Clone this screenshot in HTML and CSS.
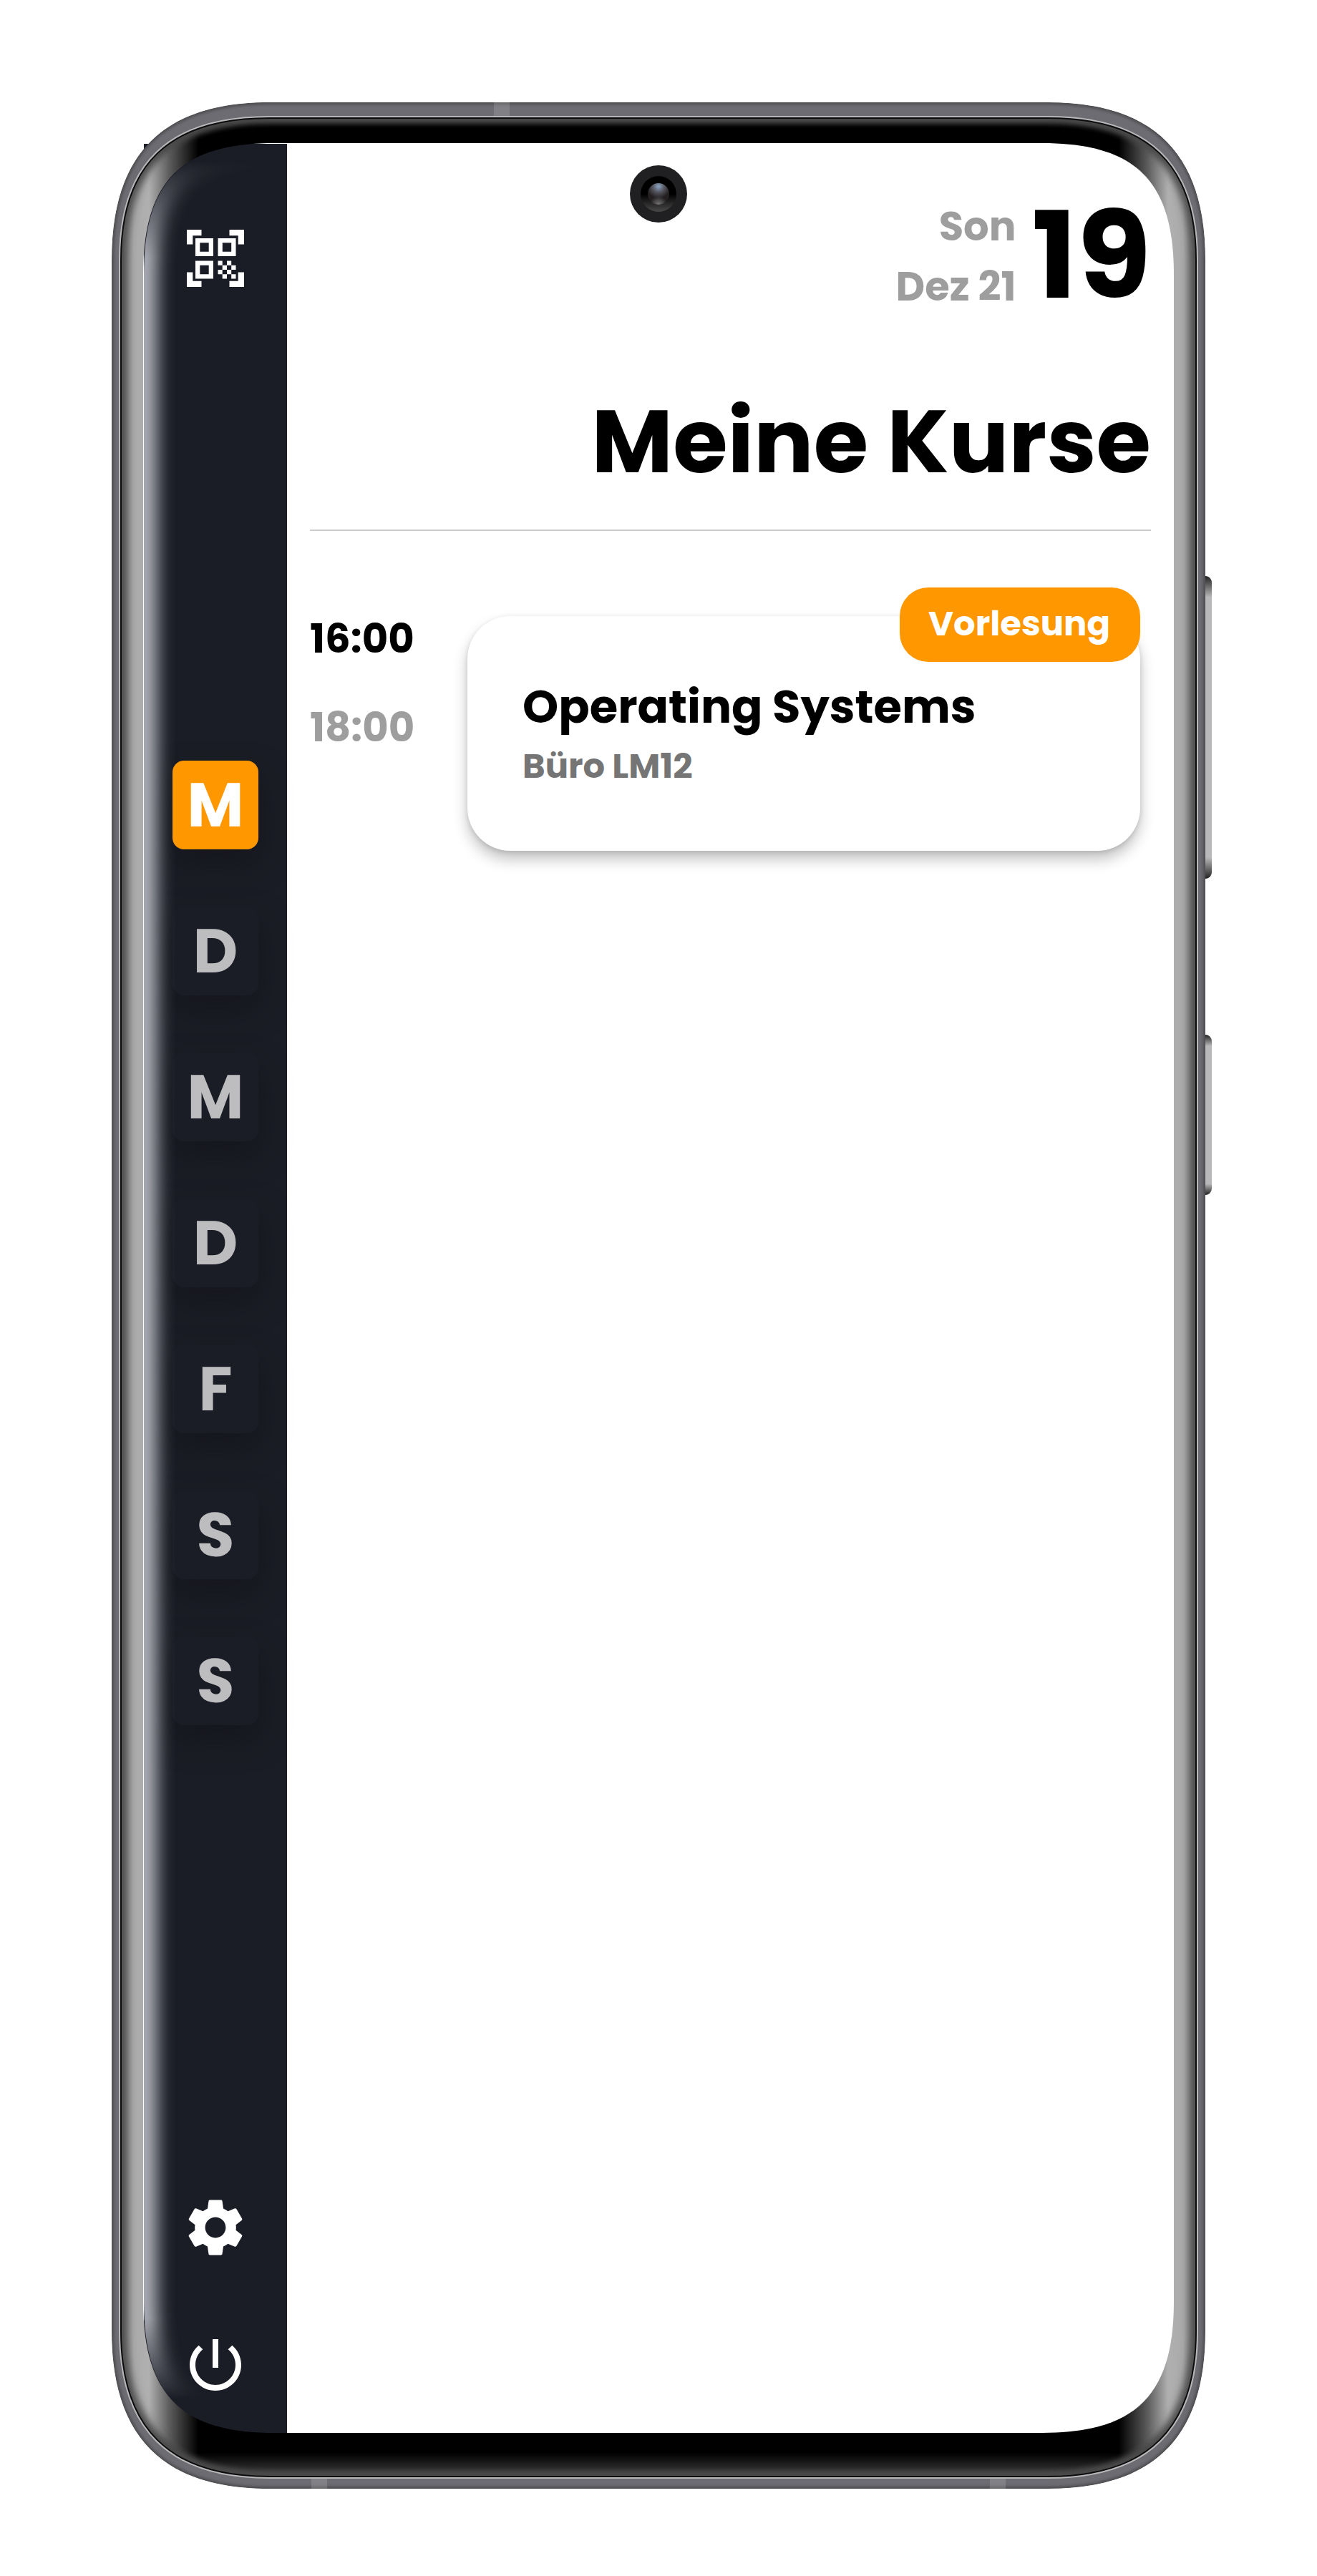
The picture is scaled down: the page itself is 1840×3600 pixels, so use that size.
FILE: index.html
```html
<!DOCTYPE html>
<html lang="de">
<head>
<meta charset="utf-8">
<title>Meine Kurse</title>
<link rel="stylesheet" href="styles.css">
</head>
<body>
<div class="device">
  <div class="screen">
    <nav class="sidebar">
      <svg class="icon-qr" viewBox="0 0 80 80" fill="#fff">
        <path d="M0 0h20.500v8.300H8.300v12.200H0zM59.500 0H80v20.500h-8.300V8.300H59.500zM0 59.500h8.300v12.200h12.200V80H0zM71.700 59.500H80V80H59.500v-8.300h12.200z"/>
        <path fill-rule="evenodd" d="M12 12h25v25H12zM18.300 18.300v12.400h12.400V18.300zM43.500 12h25v25h-25zM49.800 18.300v12.400h12.400V18.300zM12 43.500h25v25H12zM18.300 49.800v12.400h12.400V49.800z"/>
        <path d="M43.500 43.500h6.200v6.200h-6.200zM56 43.500h6.200v6.200H56zM49.700 49.700H56V56h-6.300zM62.200 49.700h6.300V56h-6.300zM43.500 56h6.200v6.200h-6.200zM56 56h6.200v6.200H56zM49.700 62.200H56v6.300h-6.300zM62.200 62.200h6.300v6.300h-6.300z"/>
      </svg>
      <div class="days">
        <span class="day active">M</span>
        <span class="day">D</span>
        <span class="day">M</span>
        <span class="day">D</span>
        <span class="day">F</span>
        <span class="day">S</span>
        <span class="day">S</span>
      </div>
      <div class="tools">
        <svg class="icon" viewBox="0 0 24 24" fill="#fff"><path d="M19.140 12.940c.04-.3.06-.61.06-.94 0-.32-.02-.64-.07-.94l2.030-1.580c.18-.14.23-.41.12-.61l-1.920-3.320c-.12-.22-.37-.29-.59-.22l-2.390.96c-.5-.38-1.030-.7-1.620-.94l-.36-2.540c-.04-.24-.24-.41-.48-.41h-3.840c-.24 0-.43.17-.47.41l-.36 2.540c-.59.24-1.130.57-1.620.94l-2.390-.96c-.22-.08-.47 0-.59.22L2.740 8.870c-.12.21-.08.47.12.61l2.030 1.580c-.05.3-.09.63-.09.94s.02.64.07.94l-2.030 1.580c-.18.14-.23.41-.12.61l1.920 3.320c.12.22.37.29.59.22l2.390-.96c.5.38 1.030.7 1.620.94l.36 2.540c.05.24.24.41.48.41h3.840c.24 0 .44-.17.47-.41l.36-2.540c.59-.24 1.130-.56 1.620-.94l2.390.96c.22.08.47 0 .59-.22l1.920-3.320c.12-.22.07-.47-.12-.61l-2.010-1.580zM12 15.600c-1.980 0-3.600-1.620-3.600-3.600s1.620-3.600 3.600-3.600 3.600 1.620 3.600 3.600-1.620 3.600-3.600 3.600z"/></svg>
        <svg class="icon" viewBox="0 0 24 24" fill="#fff"><path d="M13 3h-2v10h2V3zm4.830 2.170l-1.420 1.420C17.990 7.860 19 9.810 19 12c0 3.870-3.130 7-7 7s-7-3.130-7-7c0-2.190 1.010-4.140 2.580-5.420L6.170 5.170C4.230 6.820 3 9.260 3 12c0 4.970 4.030 9 9 9s9-4.030 9-9c0-2.740-1.230-5.180-3.170-6.830z"/></svg>
      </div>
    </nav>
    <main class="content">
      <div class="date">
        <div class="date-side"><span>Son</span><span>Dez 21</span></div>
        <div class="date-day">19</div>
      </div>
      <h1 class="title">Meine Kurse</h1>
      <section class="lesson">
        <div class="times"><span class="start">16:00</span><span class="end">18:00</span></div>
        <article class="card">
          <span class="badge">Vorlesung</span>
          <h2>Operating Systems</h2>
          <p>Büro LM12</p>
        </article>
      </section>
    </main>
  </div>

  <svg class="frame" viewBox="0 0 1840 3600">
    <defs>
      <linearGradient id="bezel" gradientUnits="userSpaceOnUse" x1="169" y1="0" x2="1671" y2="0">
        <stop offset="0" stop-color="#7c7c7c"/><stop offset=".012" stop-color="#aaa"/><stop offset=".026" stop-color="#b0b0b0"/><stop offset=".045" stop-color="#5c5c5c"/><stop offset=".072" stop-color="#000"/>
        <stop offset=".928" stop-color="#000"/><stop offset=".955" stop-color="#5c5c5c"/><stop offset=".974" stop-color="#b0b0b0"/><stop offset=".988" stop-color="#aaa"/><stop offset="1" stop-color="#7c7c7c"/>
      </linearGradient>
      <linearGradient id="chin" x1="0" y1="0" x2="0" y2="1"><stop offset="0" stop-color="#fff" stop-opacity="0"/><stop offset="1" stop-color="#fff" stop-opacity=".25"/></linearGradient>
      <linearGradient id="key" x1="0" y1="0" x2="0" y2="1"><stop offset="0" stop-color="#222"/><stop offset=".07" stop-color="#b8b8ba"/><stop offset=".93" stop-color="#b8b8ba"/><stop offset="1" stop-color="#222"/></linearGradient>
      <linearGradient id="fade" gradientUnits="userSpaceOnUse" x1="0" y1="200" x2="0" y2="3400"><stop offset=".008" stop-color="#000"/><stop offset=".05" stop-color="#fff"/><stop offset=".95" stop-color="#fff"/><stop offset=".985" stop-color="#000"/></linearGradient>
      <linearGradient id="socket" x1="0" y1="0" x2="0" y2="1"><stop offset=".5" stop-color="#000"/><stop offset="1" stop-color="#4a4a4a"/></linearGradient>
      <radialGradient id="lens" cx=".5" cy=".15" r=".55"><stop offset="0" stop-color="#8aa4c4"/><stop offset=".5" stop-color="#55555f"/><stop offset="1" stop-color="#231f20"/></radialGradient>
      <radialGradient id="glint" cx=".5" cy="1" r=".4"><stop offset="0" stop-color="#777"/><stop offset="1" stop-color="#777" stop-opacity="0"/></radialGradient>
      <filter id="soft" filterUnits="userSpaceOnUse" x="100" y="100" width="1640" height="3420"><feGaussianBlur stdDeviation="6 3"/></filter>
      <filter id="edge" filterUnits="userSpaceOnUse" x="100" y="100" width="1640" height="3420"><feGaussianBlur stdDeviation="2"/></filter>
      <filter id="glow" filterUnits="userSpaceOnUse" x="100" y="100" width="1640" height="3420"><feGaussianBlur stdDeviation="12"/></filter>
      <path id="outer" d="M156 363C156 215 228 143 376 143H1464C1612 143 1684 215 1684 363V3258C1684 3406 1612 3478 1464 3478H376C228 3478 156 3406 156 3258Z"/>
      <path id="inner" d="M169 363C169 230 236 165 376 165H1464C1604 165 1671 230 1671 363V3258C1671 3393 1604 3461 1464 3461H376C236 3461 169 3393 169 3258Z"/>
      <path id="display" d="M200 384C200 253 253 200 384 200H1456C1587 200 1640 253 1640 384V3216C1640 3347 1587 3400 1456 3400H384C253 3400 200 3347 200 3216Z"/>
      <clipPath id="inOuter"><use href="#outer"/></clipPath>
      <clipPath id="inInner"><use href="#inner"/></clipPath>
      <clipPath id="inDisplay"><path d="M201 384C201 253 253 201 384 201H401V3400H384C253 3400 201 3347 201 3216Z"/></clipPath>
      <mask id="ring" maskUnits="userSpaceOnUse" x="0" y="0" width="1840" height="3600"><use href="#outer" fill="#fff"/><use href="#display" fill="#000"/></mask>
      <mask id="fadeMask" maskUnits="userSpaceOnUse" x="0" y="0" width="1840" height="3600"><rect width="1840" height="3600" fill="url(#fade)"/></mask>
    </defs>

    <g clip-path="url(#inDisplay)"><g mask="url(#fadeMask)">
      <use href="#display" fill="none" stroke="#dcdde6" stroke-opacity=".8" stroke-width="38" filter="url(#glow)"/>
    </g></g>

    <rect x="1676" y="805" width="17" height="423" rx="9" fill="url(#key)"/>
    <rect x="1676" y="1446" width="17" height="224" rx="9" fill="url(#key)"/>

    <g mask="url(#ring)">
      <use href="#outer" fill="#6d6c72"/>
      <g clip-path="url(#inOuter)">
        <use href="#outer" fill="none" stroke="#47464a" stroke-width="5" filter="url(#edge)"/>
        <path d="M690 143h22v20h-22zM435 3461h22v17h-22zM1383 3461h22v17h-22z" fill="#fff" fill-opacity=".14"/>
      </g>
      <use href="#inner" fill="#b8b8ba" stroke="#b8b8ba" stroke-width="6"/>
      <use href="#inner" fill="url(#bezel)"/>
      <g clip-path="url(#inInner)">
        <rect x="169" y="3428" width="1502" height="33" fill="url(#chin)"/>
        <use href="#inner" fill="none" stroke="#4a4a4a" stroke-width="16" filter="url(#soft)"/>
      </g>
      <use href="#inner" fill="none" stroke="#0c0c0c" stroke-width="2"/>
    </g>

    <circle cx="920" cy="271" r="40" fill="#202022"/>
    <circle cx="920" cy="271" r="25" fill="url(#socket)"/>
    <circle cx="920" cy="271" r="15" fill="url(#lens)"/>
    <circle cx="920" cy="271" r="15" fill="url(#glint)"/>
  </svg>
</div>
</body>
</html>
```
FILE: styles.css
```css
* { box-sizing: border-box; margin: 0; padding: 0; }
body { background: #fff; font-family: "Poppins", "Inter", sans-serif; font-weight: 700; color: #000; }
.device { position: relative; width: 1840px; height: 3600px; padding: 201px 200px 200px 201px; }
.screen { display: flex; height: 3199px; }
.frame { position: absolute; inset: 0; width: 1840px; height: 3600px; pointer-events: none; }

.sidebar { width: 200px; background: #1b1d26; display: flex; flex-direction: column; align-items: center; justify-content: space-between; padding: 120px 0 47px; }
.icon-qr { width: 80px; height: 80px; }
.days { display: flex; flex-direction: column; gap: 80px; margin-top: 8px; }
.day { display: flex; align-items: center; justify-content: center; width: 120px; height: 124px; border-radius: 16px; background: #1b1d26; color: #bdbdbf; font-size: 86px; line-height: 1; box-shadow: 0 20px 40px rgba(16, 16, 24, .55); }
.day.active { background: #ff9800; color: #fff; }
.tools { display: flex; flex-direction: column; gap: 96px; }
.icon { display: block; width: 96px; height: 96px; }

.content { flex: 1; padding: 80px 32px 0; }
.date { display: flex; justify-content: flex-end; gap: 22px; height: 168px; }
.date-side { display: flex; flex-direction: column; align-items: flex-end; margin-top: -6px; color: #9e9e9e; font-size: 56px; line-height: 84px; }
.date-day { font-size: 168px; line-height: 154px; }
.title { height: 293px; padding-top: 83px; border-bottom: 2px solid #ccc; text-align: right; font-size: 124px; line-height: 170px; }
.lesson { display: flex; }
.times { display: flex; flex-direction: column; flex: none; width: 220px; padding-top: 89px; }
.start, .end { font-size: 56px; line-height: 124px; }
.end { color: #9e9e9e; }
.card { position: relative; flex: none; width: 940px; height: 328px; margin-top: 119px; padding: 79px 77px; border-radius: 60px; box-shadow: 0 12px 20px rgba(0, 0, 0, .24), 0 2px 6px rgba(0, 0, 0, .12); }
.card h2 { font-size: 64px; line-height: 96px; white-space: nowrap; }
.card p { font-size: 48px; line-height: 70px; color: #757575; }
.badge { position: absolute; right: 0; top: -40px; width: 336px; height: 104px; padding-right: 2px; border-radius: 40px; background: #ff9800; color: #fff; font-size: 48px; line-height: 102px; text-align: center; }
```
